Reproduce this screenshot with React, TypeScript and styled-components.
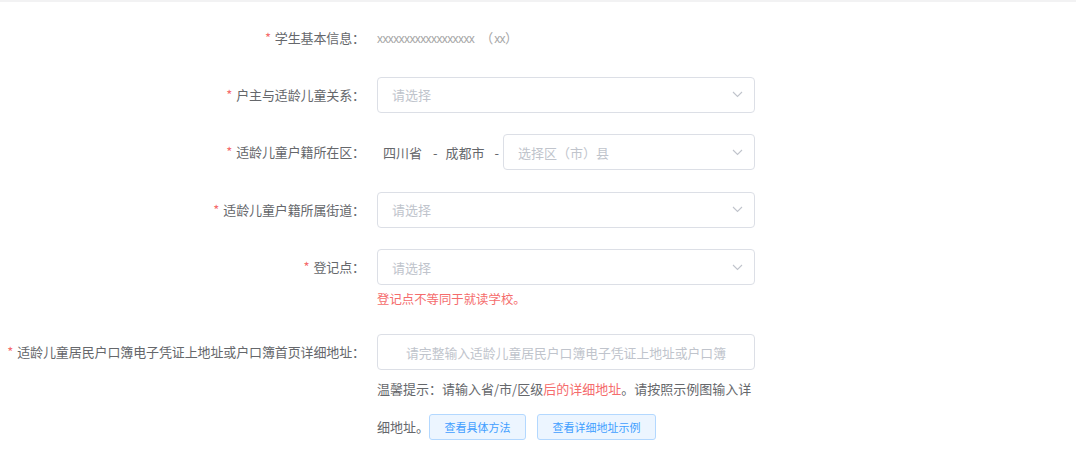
import React from "react";
import styled, { createGlobalStyle } from "styled-components";

const GlobalStyle = createGlobalStyle`
  html, body {
    margin: 0;
    padding: 0;
    background: #ffffff;
  }
  body {
    font-family: "Noto Sans CJK SC", "Noto Sans", sans-serif;
    font-size: 13px;
    color: #65676b;
  }
  * { box-sizing: border-box; }
`;

const Page = styled.div`
  width: 1076px;
  min-height: 454px;
  border-top: 2px solid #f2f2f3;
  padding-top: 17.5px;
`;

const Form = styled.form`
  display: flex;
  flex-direction: column;
  gap: 21.4px;
`;

const FormItem = styled.div`
  display: flex;
  align-items: flex-start;
`;

const Label = styled.label`
  width: 377px;
  flex: none;
  padding-right: 12px;
  text-align: right;
  line-height: 36px;
  height: 36px;
  font-size: 13px;
  letter-spacing: -0.12px;
  color: #65676b;
  white-space: nowrap;
`;

const Star = styled.span`
  color: #f56c6c;
  margin-right: 4px;
`;

const Content = styled.div`
  width: 378px;
  flex: none;
  display: flex;
  flex-direction: column;
`;

const StaticValue = styled.div`
  line-height: 36px;
  height: 36px;
  color: #a6a6a6;
  font-size: 13px;
`;

const XText = styled.span`
  font-family: "Liberation Sans", sans-serif;
  font-size: 12px;
  letter-spacing: -0.6px;
`;

const Paren = styled.span`
  margin-left: 6px;
  letter-spacing: 1px;
`;

const SelectBox = styled.div<{ $grow?: boolean }>`
  height: 36px;
  border: 1px solid #dcdfe6;
  border-radius: 4px;
  padding: 0 11px 0 14px;
  display: flex;
  align-items: center;
  justify-content: space-between;
  background: #fff;
  flex: ${(p) => (p.$grow ? "1" : "none")};
`;

const Placeholder = styled.span`
  color: #c0c4cc;
  font-size: 13px;
`;

const Region = styled.div`
  display: flex;
  align-items: center;
  height: 36px;
`;

const RegionText = styled.span<{ $ml: number }>`
  margin-left: ${(p) => p.$ml}px;
  color: #65676b;
  font-size: 13px;
  white-space: nowrap;
`;

const RegionSelect = styled.div`
  margin-left: 4px;
  flex: 1;
  display: flex;
`;

const ErrorText = styled.div`
  color: #f56c6c;
  font-size: 12.4px;
  line-height: 28px;
  height: 28px;
`;

const TextInput = styled.input`
  height: 36px;
  width: 100%;
  border: 1px solid #dcdfe6;
  border-radius: 4px;
  padding: 0 15px;
  text-align: center;
  font-family: "Noto Sans CJK SC", "Noto Sans", sans-serif;
  font-size: 12.8px;
  color: #606266;
  outline: none;
  &::placeholder {
    color: #c0c4cc;
  }
`;

const Hint = styled.div`
  font-size: 13px;
  line-height: 38px;
  color: #65676b;
`;

const Highlight = styled.span`
  color: #f56c6c;
`;

const LightButton = styled.button<{ $ml: number }>`
  display: inline-block;
  vertical-align: middle;
  height: 26px;
  margin-left: ${(p) => p.$ml}px;
  padding: 0 14.5px;
  margin-top: -3px;
  border: 1px solid #b3d8ff;
  border-radius: 3px;
  background: #ecf5ff;
  color: #409eff;
  font-family: "Noto Sans CJK SC", "Noto Sans", sans-serif;
  font-size: 11px;
  line-height: 24px;
  cursor: pointer;
`;

const Chevron = () => (
  <svg width="11" height="7" viewBox="0 0 11 7" fill="none">
    <polyline points="1,1 5.5,5.5 10,1" stroke="#c0c4cc" strokeWidth="1.1" />
  </svg>
);

const Select: React.FC<{ text: string; grow?: boolean }> = ({ text, grow }) => (
  <SelectBox $grow={grow}>
    <Placeholder>{text}</Placeholder>
    <Chevron />
  </SelectBox>
);

export default function App() {
  return (
    <>
      <GlobalStyle />
      <Page>
        <Form onSubmit={(e) => e.preventDefault()}>
          <FormItem>
            <Label>
              <Star>*</Star>学生基本信息：
            </Label>
            <Content>
              <StaticValue>
                <XText>xxxxxxxxxxxxxxxxxx</XText>
                <Paren>（<XText>xx</XText>）</Paren>
              </StaticValue>
            </Content>
          </FormItem>

          <FormItem>
            <Label>
              <Star>*</Star>户主与适龄儿童关系：
            </Label>
            <Content>
              <Select text="请选择" />
            </Content>
          </FormItem>

          <FormItem>
            <Label>
              <Star>*</Star>适龄儿童户籍所在区：
            </Label>
            <Content>
              <Region>
                <RegionText $ml={6}>四川省</RegionText>
                <RegionText $ml={11}>-</RegionText>
                <RegionText $ml={8}>成都市</RegionText>
                <RegionText $ml={10}>-</RegionText>
                <RegionSelect>
                  <Select text="选择区（市）县" grow />
                </RegionSelect>
              </Region>
            </Content>
          </FormItem>

          <FormItem>
            <Label>
              <Star>*</Star>适龄儿童户籍所属街道：
            </Label>
            <Content>
              <Select text="请选择" />
            </Content>
          </FormItem>

          <FormItem>
            <Label>
              <Star>*</Star>登记点：
            </Label>
            <Content>
              <Select text="请选择" />
              <ErrorText>登记点不等同于就读学校。</ErrorText>
            </Content>
          </FormItem>

          <FormItem>
            <Label>
              <Star>*</Star>适龄儿童居民户口簿电子凭证上地址或户口簿首页详细地址：
            </Label>
            <Content>
              <TextInput placeholder="请完整输入适龄儿童居民户口簿电子凭证上地址或户口簿" />
              <Hint>
                温馨提示：请输入省/市/区级<Highlight>后的详细地址</Highlight>
                。请按照示例图输入详细地址。
                <LightButton type="button" $ml={0}>
                  查看具体方法
                </LightButton>
                <LightButton type="button" $ml={11}>
                  查看详细地址示例
                </LightButton>
              </Hint>
            </Content>
          </FormItem>
        </Form>
      </Page>
    </>
  );
}
